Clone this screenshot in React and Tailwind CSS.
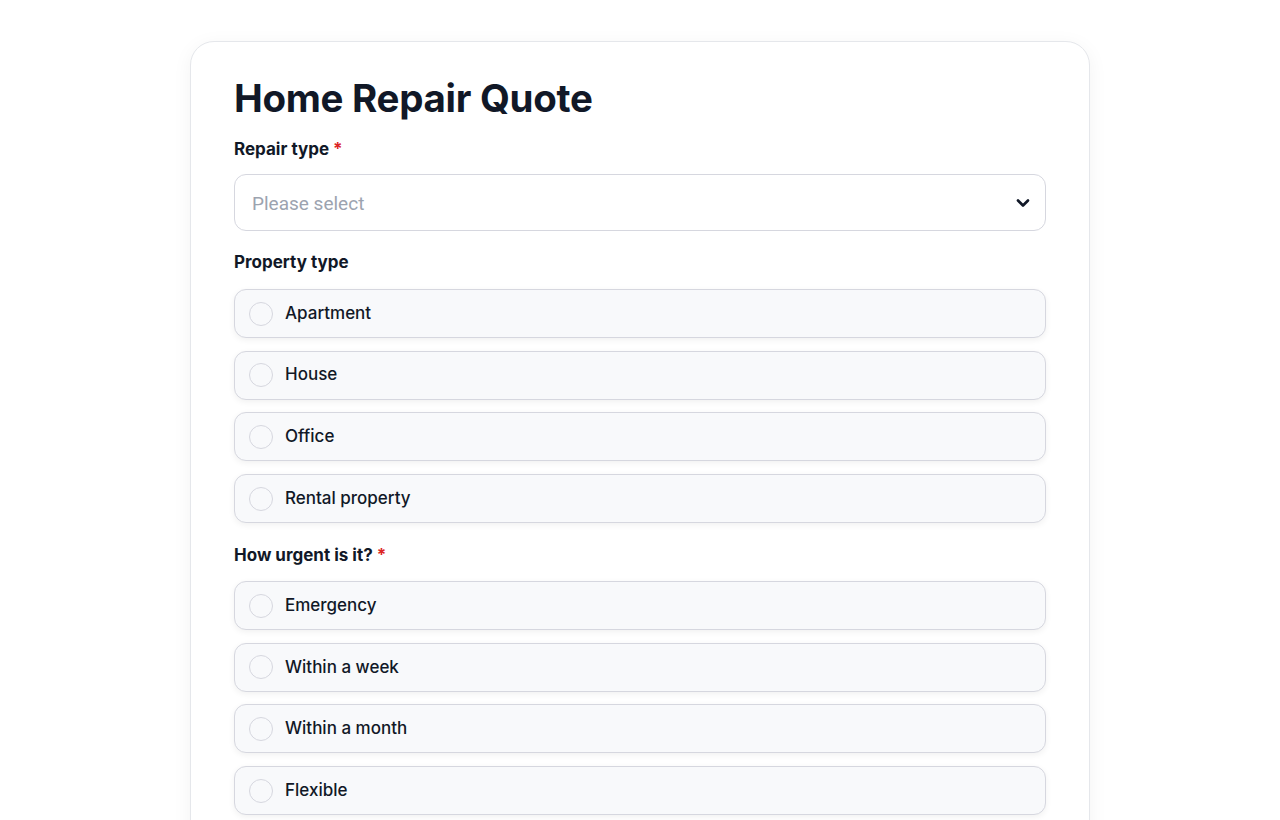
import React from 'react';

const propertyTypes = ['Apartment', 'House', 'Office', 'Rental property'];
const urgency = ['Emergency', 'Within a week', 'Within a month', 'Flexible'];

const font = { fontFamily: 'Inter, "Noto Sans", sans-serif' };

const Label = ({ children, required }) => (
  <div className="text-[17px] font-bold text-[#111827] leading-[24px]">
    {children}
    {required && <span className="text-[#dc2626] ml-1">*</span>}
  </div>
);

const Option = ({ label }) => (
  <label className="flex items-center gap-3 h-[49px] px-[14px] rounded-xl border border-[#d6d7df] bg-[#f8f9fb] shadow-[0_2px_6px_rgba(0,0,0,0.06)] cursor-pointer">
    <span className="w-[24px] h-[24px] rounded-full border border-[#d6d7df] bg-[#f8f9fb]" />
    <span className="text-[17px] font-medium text-[#111827]">{label}</span>
  </label>
);

export default function App() {
  return (
    <div className="min-h-screen bg-white pt-[41px]" style={font}>
      <div className="mx-auto w-[900px] rounded-[24px] border border-[#e5e7eb] bg-white shadow-[0_4px_20px_rgba(0,0,0,0.05)] px-[43px] pt-[30px] pb-10">
        <h1 className="text-[38.5px] font-bold text-[#111827] leading-[52px] tracking-[-0.3px]">
          Home Repair Quote
        </h1>

        <div className="mt-[13px]">
          <Label required>Repair type</Label>
          <div className="mt-[13px] h-[57px] rounded-xl border border-[#d6d7df] bg-white flex items-center justify-between pl-[17px] pr-[12px]">
            <span className="text-[19px] text-[#9ca3af] pt-[4px]" style={{ fontFamily: 'Roboto, sans-serif' }}>
              Please select
            </span>
            <svg width="20" height="20" viewBox="0 0 24 24" fill="none" stroke="#111827" strokeWidth="3.2" strokeLinecap="round" strokeLinejoin="round">
              <path d="M6 9l6 6 6-6" />
            </svg>
          </div>
        </div>

        <div className="mt-[19px]">
          <Label>Property type</Label>
          <div className="mt-[15px] flex flex-col gap-[12.7px]">
            {propertyTypes.map((p) => (
              <Option key={p} label={p} />
            ))}
          </div>
        </div>

        <div className="mt-[20px]">
          <Label required>How urgent is it?</Label>
          <div className="mt-[14px] flex flex-col gap-[12.7px]">
            {urgency.map((p) => (
              <Option key={p} label={p} />
            ))}
          </div>
        </div>
      </div>
    </div>
  );
}
